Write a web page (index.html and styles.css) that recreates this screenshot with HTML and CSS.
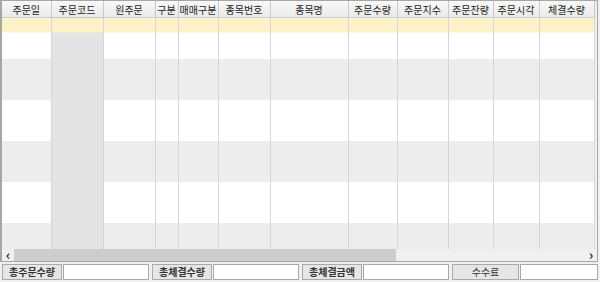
FILE: index.html
```html
<!DOCTYPE html>
<html lang="ko">

<head>
    <meta charset="UTF-8">
    <title>주문내역</title>
    <link rel="stylesheet" href="styles.css">
</head>

<body>
    <div class="grid">
        <div class="view">
            <table>
                <colgroup>
                    <col style="width:49px">
                    <col style="width:52px">
                    <col style="width:52px">
                    <col style="width:23px">
                    <col style="width:40px">
                    <col style="width:52px">
                    <col style="width:78px">
                    <col style="width:49px">
                    <col style="width:51px">
                    <col style="width:45px">
                    <col style="width:46px">
                    <col style="width:55px">
                </colgroup>
                <thead>
                    <tr>
                        <th>주문일</th>
                        <th>주문코드</th>
                        <th>원주문</th>
                        <th>구분</th>
                        <th>매매구분</th>
                        <th>종목번호</th>
                        <th>종목명</th>
                        <th>주문수량</th>
                        <th>주문지수</th>
                        <th>주문잔량</th>
                        <th>주문시각</th>
                        <th>체결수량</th>
                    </tr>
                </thead>
                <tbody>
                    <tr class="sel"><td></td><td class="code"></td><td></td><td></td><td></td><td></td><td></td><td></td><td></td><td></td><td></td><td></td></tr>
                    <tr class="alt"><td></td><td class="code"></td><td></td><td></td><td></td><td></td><td></td><td></td><td></td><td></td><td></td><td></td></tr>
                    <tr><td></td><td class="code"></td><td></td><td></td><td></td><td></td><td></td><td></td><td></td><td></td><td></td><td></td></tr>
                    <tr class="alt"><td></td><td class="code"></td><td></td><td></td><td></td><td></td><td></td><td></td><td></td><td></td><td></td><td></td></tr>
                    <tr><td></td><td class="code"></td><td></td><td></td><td></td><td></td><td></td><td></td><td></td><td></td><td></td><td></td></tr>
                    <tr class="alt"><td></td><td class="code"></td><td></td><td></td><td></td><td></td><td></td><td></td><td></td><td></td><td></td><td></td></tr>
                </tbody>
            </table>
        </div>
        <div class="hscroll">
            <span class="arrow">&lsaquo;</span>
            <div class="track"><div class="thumb"></div></div>
            <span class="arrow">&rsaquo;</span>
        </div>
    </div>

    <div class="totals">
        <div class="group"><span class="label">총주문수량</span><span class="value"></span></div>
        <div class="group"><span class="label">총체결수량</span><span class="value"></span></div>
        <div class="group"><span class="label">총체결금액</span><span class="value"></span></div>
        <div class="group"><span class="label wide">수수료</span><span class="value"></span></div>
    </div>
</body>

</html>
```

FILE: styles.css
```css
body {
    margin: 0;
    font-family: "Noto Sans CJK KR", "Noto Sans", sans-serif;
    font-size: 10px;
    color: #222;
    background-color: #f0f0f0;
}

.grid {
    width: 598px;
    height: 262px;
    border: 1px solid #a6a6a6;
    border-left: 2px solid #a6a6a6;
    box-sizing: border-box;
    background-color: #f0f0f0;
    display: flex;
    flex-direction: column;
}

.view {
    height: 249px;
    overflow: hidden;
}

table {
    table-layout: fixed;
    border-collapse: collapse;
    width: 592px;
}

th {
    height: 16px;
    padding: 0;
    font-weight: normal;
    font-size: 10px;
    line-height: 15px;
    white-space: nowrap;
    overflow: hidden;
    background: linear-gradient(#f8f8f8, #eaeaea);
    border-right: 1px solid #c9c9c9;
    border-bottom: 1px solid #c9c9c9;
}

tbody tr {
    height: 41px;
}

td {
    padding: 0;
    background-color: #fff;
    border-right: 1px solid #d6d6d6;
}

tr.alt td {
    background-color: #ededed;
}

tr td.code {
    background-color: #e4e4e4;
}

tr.sel td {
    background: linear-gradient(#fdf1c8 0 14px, #fff 14px);
}

tr.sel td.code {
    background: linear-gradient(#fdf1c8 0 14px, #e4e4e4 14px);
}

.hscroll {
    height: 12px;
    display: flex;
    align-items: center;
    background-color: #f0f0f0;
}

.arrow {
    width: 12px;
    text-align: center;
    font-size: 13px;
    font-weight: bold;
    line-height: 12px;
}

.track {
    flex: 1;
    height: 12px;
}

.thumb {
    width: 382px;
    height: 12px;
    background-color: #cdcdcd;
}

.totals {
    margin: 2px 0 0 2px;
    width: 596px;
    display: grid;
    grid-template-columns: 147px 147px 147px 146px;
    gap: 3px;
    height: 16px;
}

.group {
    display: flex;
    gap: 1px;
}

.label {
    width: 58px;
    border: 1px solid #a9a9a9;
    background-color: #e6e6e6;
    text-align: center;
    font-weight: bold;
    line-height: 14px;
    color: #333;
}

.label.wide {
    width: 65px;
    font-weight: normal;
}

.value {
    flex: 1;
    border: 1px solid #a9a9a9;
    background-color: #fff;
}
```
